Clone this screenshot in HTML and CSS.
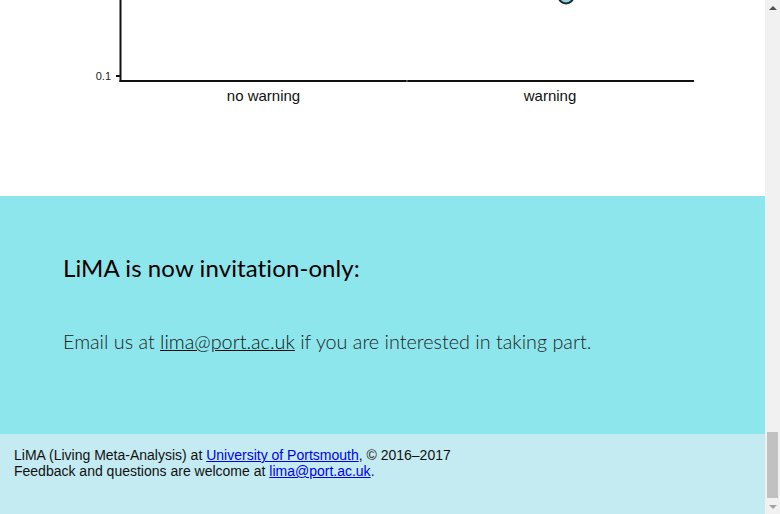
FILE: index.html
```html
<!DOCTYPE html>
<html>
<head>
<meta charset="utf-8">
<title>LiMA</title>
<link rel="stylesheet" href="styles.css">
</head>
<body>
<div class="window">
  <div class="page">
    <section class="chart">
      <svg class="plot" width="765" height="196" viewBox="0 0 765 196">
        <circle cx="566" cy="-4" r="7.5" fill="#8fd3e0" stroke="#1a2a2e" stroke-width="2"/>
        <line x1="120.5" y1="0" x2="120.5" y2="82" stroke="#111" stroke-width="2"/>
        <line x1="119.5" y1="81" x2="694" y2="81" stroke="#111" stroke-width="2"/>
        <line x1="116" y1="76" x2="120" y2="76" stroke="#111" stroke-width="2"/>
        <line x1="407" y1="80" x2="407" y2="82" stroke="#888" stroke-width="1"/>
        <text class="tick" x="111" y="80" text-anchor="end">0.1</text>
        <text class="cat" x="263.5" y="101" text-anchor="middle">no warning</text>
        <text class="cat" x="550" y="101" text-anchor="middle">warning</text>
      </svg>
    </section>
    <section class="invite">
      <h2 class="invite-title">LiMA is now invitation-only:</h2>
      <p class="invite-text">Email us at <a href="#">lima@port.ac.uk</a> if you are interested in taking part.</p>
    </section>
    <footer class="footer">
      <p>LiMA (Living Meta-Analysis) at <a href="#">University of Portsmouth</a>, © 2016–2017<br>
      Feedback and questions are welcome at <a href="#">lima@port.ac.uk</a>.</p>
    </footer>
  </div>
  <div class="scrollbar">
    <div class="arrow arrow-up"></div>
    <div class="track">
      <div class="thumb"></div>
    </div>
    <div class="arrow arrow-down"></div>
  </div>
</div>
</body>
</html>
```
FILE: styles.css
```css
html, body {
  margin: 0;
  padding: 0;
  overflow: hidden;
}
body {
  font-family: "Liberation Sans", Arial, sans-serif;
  background: #fff;
}
.window {
  display: flex;
  width: 780px;
  height: 514px;
}
.page {
  width: 765px;
  display: flex;
  flex-direction: column;
}
.chart {
  height: 196px;
  background: #fff;
}
.plot {
  display: block;
  overflow: hidden;
}
.tick {
  font-family: "Liberation Sans", Arial, sans-serif;
  font-size: 11px;
  fill: #222;
}
.cat {
  font-family: "Liberation Sans", Arial, sans-serif;
  font-size: 15px;
  fill: #111;
}
.invite {
  background: #8ee6ed;
  height: 238px;
  box-sizing: border-box;
  padding: 56px 63px 0;
  font-family: Lato, "Open Sans", sans-serif;
}
.invite-title {
  margin: 0;
  font-size: 24px;
  font-weight: 400;
  line-height: 32px;
  color: #000;
  letter-spacing: 0.1px;
}
.invite-text {
  margin: 44px 0 0;
  font-size: 19.8px;
  font-weight: 300;
  line-height: 26px;
  color: #222;
}
.invite-text a {
  color: #111;
}
.footer {
  flex: 1;
  background: #c4ebf2;
  box-sizing: border-box;
  padding: 13px 14px 0;
  font-size: 14px;
  line-height: 16px;
  color: #111;
}
.footer p {
  margin: 0;
}
.footer a {
  color: #0000ee;
}
.scrollbar {
  width: 15px;
  background: #f1f1f1;
  display: flex;
  flex-direction: column;
}
.arrow {
  height: 15px;
  display: flex;
  align-items: center;
  justify-content: center;
}
.arrow-up::before {
  content: "";
  border-left: 4px solid transparent;
  border-right: 4px solid transparent;
  border-bottom: 4px solid #505050;
}
.arrow-down::before {
  content: "";
  border-left: 4px solid transparent;
  border-right: 4px solid transparent;
  border-top: 4px solid #a3a3a3;
}
.track {
  flex: 1;
  display: flex;
  flex-direction: column;
  justify-content: flex-end;
  padding: 0 2px 1px;
}
.thumb {
  height: 66px;
  background: #c1c1c1;
}
```
